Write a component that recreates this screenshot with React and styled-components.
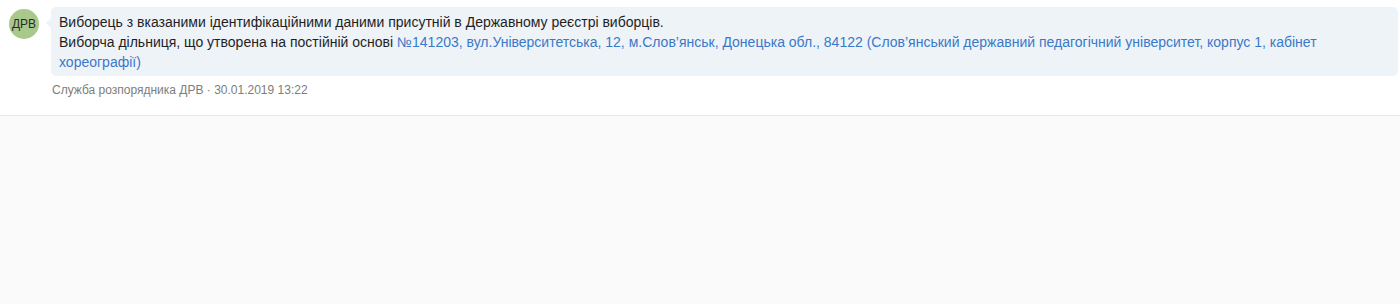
import React from 'react';
import styled, { createGlobalStyle } from 'styled-components';

const GlobalStyle = createGlobalStyle`
  html, body {
    margin: 0;
    padding: 0;
    background: #fafafa;
    font-family: "Liberation Sans", Arial, sans-serif;
  }
`

const Feed = styled.section`
  background: #ffffff;
  border-bottom: 1px solid #e6e6e6;
  box-shadow: 0 1px 1px rgba(0, 0, 0, 0.03);
`

const Message = styled.article`
  display: flex;
  align-items: flex-start;
  gap: 12px;
  padding: 7px 2px 17px 9px;
`

const Avatar = styled.div`
  flex: none;
  width: 30px;
  height: 30px;
  margin-top: 2px;
  border-radius: 50%;
  background: ${props => props.color || '#a9c98c'};
  color: #2b2b2b;
  font-size: 12px;
  display: flex;
  align-items: center;
  justify-content: center;
`

const Body = styled.div`
  flex: 1;
  min-width: 0;
`

const Bubble = styled.div`
  position: relative;
  background: #eef3f8;
  border-radius: 5px;
  padding: 5px 8px 4px 8px;
  font-size: 14px;
  line-height: 20px;
  color: #1f1f1f;

  &::before {
    content: "";
    position: absolute;
    left: -5px;
    top: 11px;
    border-style: solid;
    border-width: 5px 5px 5px 0;
    border-color: transparent #eef3f8 transparent transparent;
  }
`

const Line = styled.div``

const Link = styled.a`
  color: #3a78c9;
  text-decoration: none;
  cursor: pointer;
`

const Meta = styled.div`
  margin-top: 6px;
  padding-left: 1px;
  font-size: 12px;
  line-height: 16px;
  color: #7d7d7d;
`

export default function App() {
  return (
    <>
      <GlobalStyle />
      <Feed>
        <Message>
          <Avatar>ДРВ</Avatar>
          <Body>
            <Bubble>
              <Line>Виборець з вказаними ідентифікаційними даними присутній в Державному реєстрі виборців.</Line>
              <Line>
                Виборча дільниця, що утворена на постійній основі{' '}
                <Link>№141203, вул.Університетська, 12, м.Слов’янськ, Донецька обл., 84122 (Слов’янський державний педагогічний університет, корпус 1, кабінет хореографії)</Link>
              </Line>
            </Bubble>
            <Meta>Служба розпорядника ДРВ · 30.01.2019 13:22</Meta>
          </Body>
        </Message>
      </Feed>
    </>
  );
}
